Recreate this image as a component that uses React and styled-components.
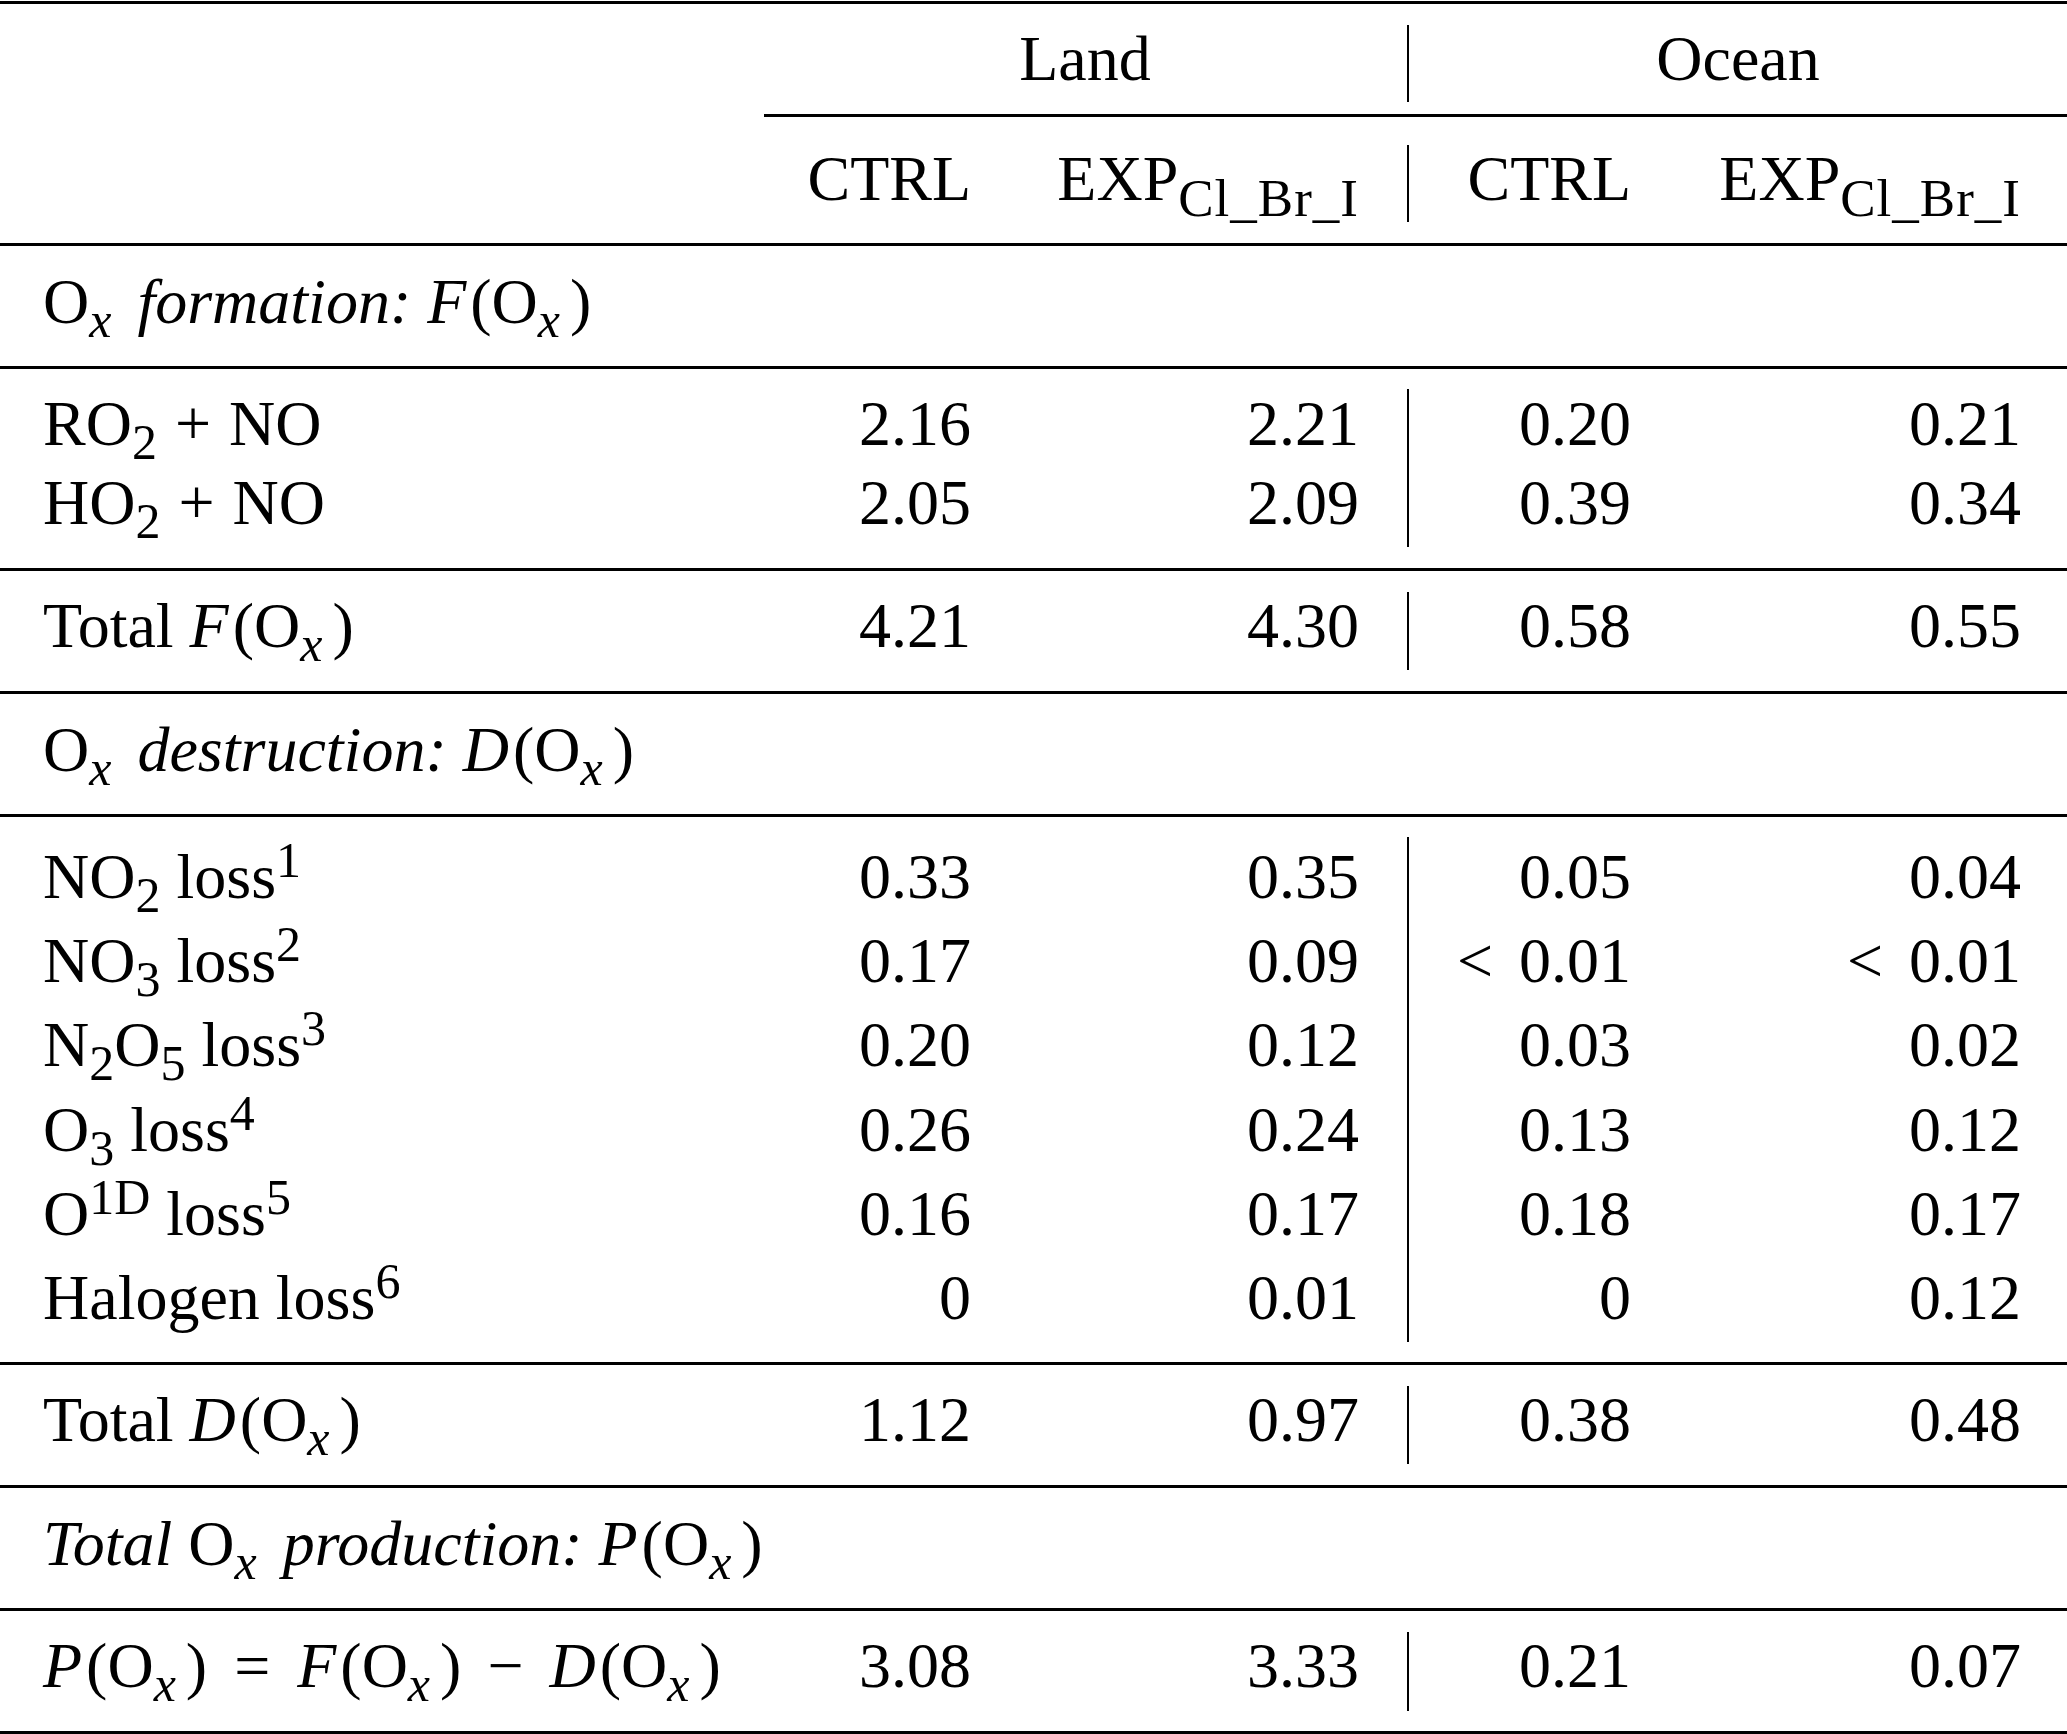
import React from 'react';
import styled, { createGlobalStyle } from 'styled-components';

const GlobalStyle = createGlobalStyle`
  html, body {
    margin: 0;
    padding: 0;
    background: #fff;
  }
`;

const COLS = '763px 253px 391px 269px 391px';
const PADS = [45, 48, 45, 46];
const DIVIDER = 2;

const Page = styled.div`
  width: 2067px;
  padding-top: 1px;
  font-family: "Liberation Serif", "Times New Roman", serif;
  font-size: 64px;
  color: #000;
`;

const Rule = styled.div`
  height: 3px;
  background: #000;
  margin-left: ${p => p.$from || 0}px;
`;

const Block = styled.div`
  padding: ${p => p.$top}px 0 ${p => p.$bottom}px;
`;

const Row = styled.div`
  display: grid;
  grid-template-columns: ${COLS};
  height: ${p => p.$h || 78}px;
  line-height: ${p => p.$lh || 67}px;
  white-space: nowrap;
`;

const Label = styled.div`
  padding-left: 43px;
`;

const Cell = styled.div`
  text-align: right;
  padding-right: ${p => p.$pad}px;
  border-left: ${p => (p.$divider ? '2px solid #000' : 'none')};
`;

const Group = styled.div`
  grid-column: span 2;
  text-align: center;
  border-left: ${p => (p.$divider ? '2px solid #000' : 'none')};
`;

const Section = styled.div`
  height: 78px;
  line-height: 67px;
  padding-left: 43px;
  white-space: nowrap;
`;

const Sub = styled.span`
  font-size: 50px;
  line-height: 0;
  vertical-align: -14px;
  margin-right: ${p => p.$gap || 0}px;
`;

const Sup = styled.span`
  font-size: 50px;
  line-height: 0;
  vertical-align: 21px;
`;

const HeadSub = styled.span`
  font-size: 53px;
  line-height: 0;
  letter-spacing: 1px;
  vertical-align: -16px;
`;

const Em = styled.i`
  font-style: italic;
  margin-right: ${p => p.$kern || 0}px;
`;

const Op = styled.span`
  margin: 0 ${p => p.$space}px;
`;

const Ox = () => (
  <>
    O<Sub $gap={10}><Em>x</Em></Sub>
  </>
);

const Fn = ({ f }) => (
  <>
    <Em $kern={4}>{f}</Em>(<Ox />)
  </>
);

const lt = v => (
  <>
    &lt;<Op $space={13}></Op>{v}
  </>
);

const formation = [
  { label: <>RO<Sub>2</Sub><Op $space={18}>+</Op>NO</>, values: ['2.16', '2.21', '0.20', '0.21'] },
  { label: <>HO<Sub>2</Sub><Op $space={18}>+</Op>NO</>, values: ['2.05', '2.09', '0.39', '0.34'] },
];

const destruction = [
  { label: <>NO<Sub>2</Sub> loss<Sup>1</Sup></>, values: ['0.33', '0.35', '0.05', '0.04'] },
  { label: <>NO<Sub>3</Sub> loss<Sup>2</Sup></>, values: ['0.17', '0.09', lt('0.01'), lt('0.01')] },
  { label: <>N<Sub>2</Sub>O<Sub>5</Sub> loss<Sup>3</Sup></>, values: ['0.20', '0.12', '0.03', '0.02'] },
  { label: <>O<Sub>3</Sub> loss<Sup>4</Sup></>, values: ['0.26', '0.24', '0.13', '0.12'] },
  { label: <>O<Sup>1D</Sup> loss<Sup>5</Sup></>, values: ['0.16', '0.17', '0.18', '0.17'] },
  { label: <>Halogen loss<Sup>6</Sup></>, values: ['0', '0.01', '0', '0.12'] },
];

function DataRow({ label, values, h, lh }) {
  return (
    <Row $h={h} $lh={lh}>
      <Label>{label}</Label>
      {values.map((v, i) => (
        <Cell key={i} $pad={PADS[i]} $divider={i === DIVIDER}>
          {v}
        </Cell>
      ))}
    </Row>
  );
}

const exp = (
  <>
    EXP<HeadSub>Cl_Br_I</HeadSub>
  </>
);

export default function App() {
  return (
    <Page>
      <GlobalStyle />
      <Rule />
      <Block $top={21} $bottom={12}>
        <Row $h={77}>
          <Label />
          <Group>Land</Group>
          <Group $divider>Ocean</Group>
        </Row>
      </Block>
      <Rule $from={764} />
      <Block $top={28} $bottom={21}>
        <DataRow h={77} values={['CTRL', exp, 'CTRL', exp]} />
      </Block>
      <Rule />

      <Block $top={22} $bottom={20}>
        <Section>
          <Ox /> <Em>formation:</Em> <Fn f="F" />
        </Section>
      </Block>
      <Rule />
      <Block $top={20} $bottom={21}>
        {formation.map((r, i) => (
          <DataRow key={i} h={79} lh={69} label={r.label} values={r.values} />
        ))}
      </Block>
      <Rule />
      <Block $top={21} $bottom={21}>
        <DataRow label={<>Total <Fn f="F" /></>} values={['4.21', '4.30', '0.58', '0.55']} />
      </Block>
      <Rule />

      <Block $top={22} $bottom={20}>
        <Section>
          <Ox /> <Em>destruction:</Em> <Fn f="D" />
        </Section>
      </Block>
      <Rule />
      <Block $top={20} $bottom={20}>
        {destruction.map((r, i) => (
          <DataRow key={i} h={84.2} lh={79} label={r.label} values={r.values} />
        ))}
      </Block>
      <Rule />
      <Block $top={21} $bottom={21}>
        <DataRow label={<>Total <Fn f="D" /></>} values={['1.12', '0.97', '0.38', '0.48']} />
      </Block>
      <Rule />

      <Block $top={22} $bottom={20}>
        <Section>
          <Em>Total</Em> <Ox /> <Em>production:</Em> <Fn f="P" />
        </Section>
      </Block>
      <Rule />
      <Block $top={21} $bottom={20}>
        <DataRow
          h={79}
          label={
            <>
              <Fn f="P" />
              <Op $space={27}>=</Op>
              <Fn f="F" />
              <Op $space={26}>−</Op>
              <Fn f="D" />
            </>
          }
          values={['3.08', '3.33', '0.21', '0.07']}
        />
      </Block>
      <Rule />
    </Page>
  );
}
